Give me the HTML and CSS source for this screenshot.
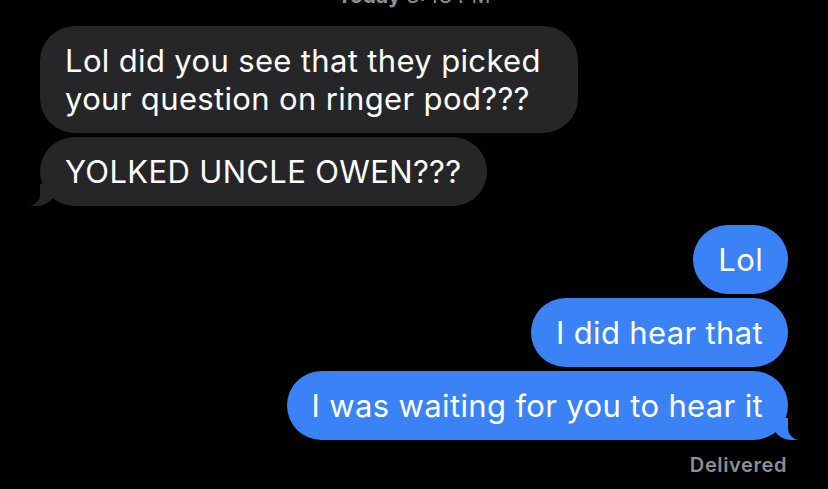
FILE: index.html
```html
<!DOCTYPE html>
<html lang="en">
<head>
    <meta charset="UTF-8">
    <meta name="viewport" content="width=device-width, initial-scale=1.0">
    <title>Messages</title>
    <link rel="stylesheet" href="styles.css">
</head>
<body>
    <div class="thread">
        <div class="stamp"><strong>Today</strong> 3:48 PM</div>

        <div class="group them">
            <div class="bubble">Lol did you see that they picked your question on ringer pod???</div>
            <div class="bubble tail">YOLKED UNCLE OWEN???</div>
        </div>

        <div class="group me">
            <div class="bubble">Lol</div>
            <div class="bubble">I did hear that</div>
            <div class="bubble tail">I was waiting for you to hear it</div>
        </div>

        <div class="status">Delivered</div>
    </div>
</body>
</html>
```

FILE: styles.css
```css
html, body {
    margin: 0;
    background-color: #000;
}
body {
    font-family: Inter, 'Noto Sans', sans-serif;
    color: #fff;
    overflow: hidden;
}
.thread {
    padding: 0 40px;
}
.stamp {
    margin-top: -17px;
    height: 26px;
    line-height: 26px;
    font-size: 21px;
    color: #8e8e93;
    text-align: center;
    margin-bottom: 17px;
}
.group {
    display: flex;
    flex-direction: column;
    gap: 4px;
}
.them {
    align-items: flex-start;
}
.me {
    align-items: flex-end;
    margin-top: 19px;
}
.bubble {
    position: relative;
    max-width: 538px;
    padding: 15.5px 25px;
    font-size: 31px;
    line-height: 38px;
    letter-spacing: 0.35px;
    border-radius: 35px;
    box-sizing: border-box;
}
.them .bubble {
    background-color: #262628;
}
.me .bubble {
    background-color: #3a82f5;
}

/* bubble tails */
.bubble.tail::before,
.bubble.tail::after {
    content: "";
    position: absolute;
    bottom: 0;
    height: 22px;
}
.them .tail::before {
    left: -10px;
    border-left: 26px solid #262628;
    border-bottom-right-radius: 20px 18px;
}
.them .tail::after {
    left: -20px;
    width: 20px;
    background-color: #000;
    border-bottom-right-radius: 12px;
}
.me .tail::before {
    right: -10px;
    border-right: 26px solid #3a82f5;
    border-bottom-left-radius: 20px 18px;
}
.me .tail::after {
    right: -20px;
    width: 20px;
    background-color: #000;
    border-bottom-left-radius: 12px;
}

.status {
    text-align: right;
    font-size: 20px;
    line-height: 24px;
    font-weight: 600;
    letter-spacing: 0.6px;
    color: #8e8e93;
    margin-top: 13px;
    padding-right: 1px;
}
```
